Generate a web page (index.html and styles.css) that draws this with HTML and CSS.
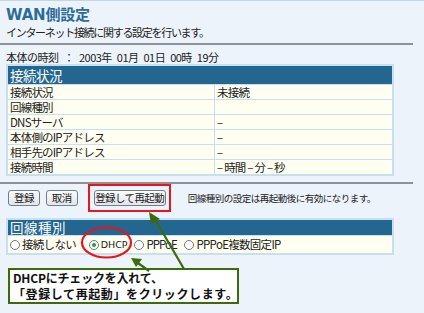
FILE: index.html
```html
<!DOCTYPE html>
<html lang="ja">
<head>
<meta charset="utf-8">
<title>WAN側設定</title>
<link rel="stylesheet" href="styles.css">
</head>
<body>
<div class="page">
  <h1 class="title">WAN側設定</h1>
  <p class="desc">インターネット接続に関する設定を行います。</p>
  <hr class="rule">
  <p class="clock">本体の時刻 ： 2003年 01月 01日 00時 19分</p>
  <table class="grid">
    <tr><th colspan="2">接続状況</th></tr>
    <tr><td class="k">接続状況</td><td>未接続</td></tr>
    <tr><td class="k">回線種別</td><td></td></tr>
    <tr><td class="k">DNSサーバ</td><td>–</td></tr>
    <tr><td class="k">本体側のIPアドレス</td><td>–</td></tr>
    <tr><td class="k">相手先のIPアドレス</td><td>–</td></tr>
    <tr><td class="k">接続時間</td><td>– 時間 – 分 – 秒</td></tr>
  </table>
  <hr class="rule rule2">
  <div class="actions">
    <button class="btn">登録</button>
    <button class="btn">取消</button>
    <span class="mark"><button class="btn">登録して再起動</button></span>
    <span class="note">回線種別の設定は再起動後に有効になります。</span>
  </div>
  <table class="grid line">
    <tr><th>回線種別</th></tr>
    <tr><td class="radios">
      <span class="opt o1"><span class="radio"></span>接続しない</span>
      <span class="opt dhcp"><span class="radio on"></span>DHCP</span>
      <span class="opt o3"><span class="radio"></span>PPPoE</span>
      <span class="opt"><span class="radio"></span>PPPoE複数固定IP</span>
    </td></tr>
  </table>
  <div class="callout"><span class="cl">DHCPにチェックを入れて、</span><span class="cl wide">「登録して再起動」をクリックします。</span></div>
  <svg class="arrows" width="424" height="313" viewBox="0 0 424 313">
    <g stroke="#3b6b0a" stroke-width="2.2" fill="none">
      <line x1="184" y1="268" x2="156" y2="220"/>
      <line x1="149" y1="270" x2="138" y2="262"/>
    </g>
    <g fill="#3b6b0a">
      <polygon points="149,211 160,218 151,223"/>
      <polygon points="131,257 142,258 136,266"/>
    </g>
    <ellipse cx="106.5" cy="241.5" rx="24.5" ry="15" fill="none" stroke="#e8141e" stroke-width="2.2"/>
  </svg>
</div>
</body>
</html>
```
FILE: styles.css
```css
html, body {
  margin: 0;
  padding: 0;
  background: #edf3fa;
}
.page {
  position: relative;
  width: 424px;
  height: 313px;
  box-sizing: border-box;
  border-top: 1px solid #c3d6e8;
  padding: 5px 0 0 6px;
  font-family: "Noto Sans CJK JP", "Liberation Sans", sans-serif;
  color: #222;
  overflow: hidden;
}
.title {
  margin: 0;
  font-family: "DejaVu Sans", "Noto Sans CJK JP", sans-serif;
  font-size: 15px;
  line-height: 18px;
  font-weight: bold;
  color: #2b6c98;
  letter-spacing: -0.2px;
}
.desc {
  margin: 1px 0 0;
  font-size: 11px;
  line-height: 14px;
  letter-spacing: -1.3px;
}
.rule {
  margin: 4px 0 0 -6px;
  width: 413px;
  height: 0;
  border: 0;
  border-top: 2px solid #8e9296;
}
.clock {
  margin: 5px 0 0;
  font-size: 11px;
  line-height: 14px;
  letter-spacing: -0.5px;
  word-spacing: 3px;
}
.grid {
  width: 388px;
  border-collapse: collapse;
  border: 2px solid #c6e0ef;
  background: #fffff1;
}
.grid th {
  background: #236690;
  color: #fff;
  text-align: left;
  font-weight: normal;
  font-size: 13.5px;
  line-height: 17px;
  height: 18px;
  padding: 0 2px;
  letter-spacing: -0.5px;
}
.grid td {
  border: 1px solid #c6e0ef;
  font-size: 11.5px;
  line-height: 13px;
  height: 14px;
  padding: 0 1px 0 2px;
  letter-spacing: -0.8px;
  color: #222;
  white-space: nowrap;
  overflow: hidden;
}
.grid td.k {
  width: 203px;
}
.rule2 {
  margin-top: 6px;
}
.actions {
  display: flex;
  align-items: center;
  margin: 0 0 0 2px;
  height: 28px;
}
.btn {
  font-family: "Noto Sans CJK JP", sans-serif;
  font-size: 10.5px;
  line-height: 12px;
  height: 16px;
  padding: 0 5px;
  border: 1px solid #6f7f8e;
  border-radius: 3px;
  background: linear-gradient(#fbfbfb, #e2e6ea);
  color: #222;
  letter-spacing: -0.6px;
  margin-right: 6px;
  white-space: nowrap;
}
.mark {
  display: inline-flex;
  margin-left: 4px;
  border: 2px solid #e8141e;
  padding: 4px 3px 4px 4px;
}
.mark .btn {
  margin: 0;
  width: 72px;
  padding: 0;
}
.note {
  margin-left: 17px;
  font-size: 9.5px;
  letter-spacing: -0.5px;
  color: #222;
  white-space: nowrap;
}
.line {
  margin-top: 6px;
}
.line th {
  line-height: 15px;
  height: 15px;
  letter-spacing: 0.5px;
}
.grid td.radios {
  height: 17px;
  line-height: 17px;
  overflow: visible;
}
.opt {
  display: inline-flex;
  align-items: center;
  font-size: 11.5px;
  letter-spacing: -0.7px;
  margin-right: 7px;
  vertical-align: top;
}
.opt.o1 {
  margin-right: 11px;
}
.opt.dhcp {
  margin-right: 5px;
  font-family: "DejaVu Sans", sans-serif;
  font-size: 9.5px;
  letter-spacing: 0;
}
.opt.o3 {
  margin-right: 6px;
  letter-spacing: -1px;
}
.radio {
  display: inline-block;
  width: 8px;
  height: 8px;
  border: 1px solid #6a7a8a;
  border-radius: 50%;
  background: #fff;
  margin-right: 2px;
  position: relative;
}
.radio.on::after {
  content: "";
  position: absolute;
  left: 2px;
  top: 2px;
  width: 4px;
  height: 4px;
  border-radius: 50%;
  background: #2e9a3a;
}
.callout {
  display: flex;
  flex-direction: column;
  justify-content: center;
  gap: 2px;
  margin: 13px 0 0 2px;
  width: 224px;
  height: 32px;
  border: 2px solid #3b6b0a;
  background: #fff;
  font-weight: bold;
  font-size: 12px;
  padding: 0 0 0 3px;
  letter-spacing: -0.2px;
  color: #111;
}
.cl {
  display: block;
  line-height: 14px;
  white-space: nowrap;
}
.cl.wide {
  letter-spacing: 0.6px;
}
.arrows {
  position: absolute;
  left: 0;
  top: 0;
  pointer-events: none;
}
```
